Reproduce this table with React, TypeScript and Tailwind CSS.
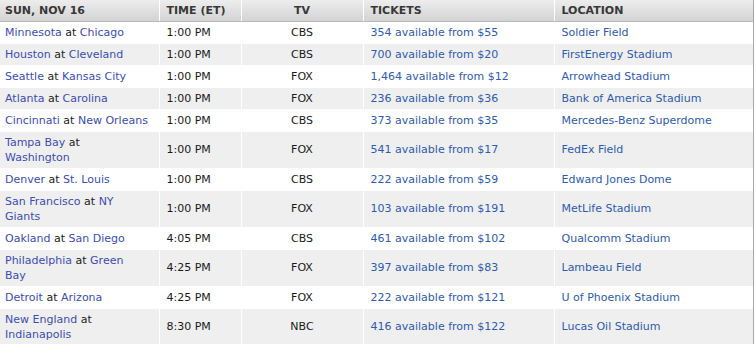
import React from "react";

type Row = {
  away: string;
  home: string;
  twoLine?: boolean;
  time: string;
  tv: string;
  tickets: string;
  location: string;
};

const rows: Row[] = [
  { away: "Minnesota", home: "Chicago", time: "1:00 PM", tv: "CBS", tickets: "354 available from $55", location: "Soldier Field" },
  { away: "Houston", home: "Cleveland", time: "1:00 PM", tv: "CBS", tickets: "700 available from $20", location: "FirstEnergy Stadium" },
  { away: "Seattle", home: "Kansas City", time: "1:00 PM", tv: "FOX", tickets: "1,464 available from $12", location: "Arrowhead Stadium" },
  { away: "Atlanta", home: "Carolina", time: "1:00 PM", tv: "FOX", tickets: "236 available from $36", location: "Bank of America Stadium" },
  { away: "Cincinnati", home: "New Orleans", time: "1:00 PM", tv: "CBS", tickets: "373 available from $35", location: "Mercedes-Benz Superdome" },
  { away: "Tampa Bay", home: "Washington", twoLine: true, time: "1:00 PM", tv: "FOX", tickets: "541 available from $17", location: "FedEx Field" },
  { away: "Denver", home: "St. Louis", time: "1:00 PM", tv: "CBS", tickets: "222 available from $59", location: "Edward Jones Dome" },
  { away: "San Francisco", home: "NY Giants", twoLine: true, time: "1:00 PM", tv: "FOX", tickets: "103 available from $191", location: "MetLife Stadium" },
  { away: "Oakland", home: "San Diego", time: "4:05 PM", tv: "CBS", tickets: "461 available from $102", location: "Qualcomm Stadium" },
  { away: "Philadelphia", home: "Green Bay", twoLine: true, time: "4:25 PM", tv: "FOX", tickets: "397 available from $83", location: "Lambeau Field" },
  { away: "Detroit", home: "Arizona", time: "4:25 PM", tv: "FOX", tickets: "222 available from $121", location: "U of Phoenix Stadium" },
  { away: "New England", home: "Indianapolis", twoLine: true, time: "8:30 PM", tv: "NBC", tickets: "416 available from $122", location: "Lucas Oil Stadium" },
];

function Home({ name, twoLine }: { name: string; twoLine?: boolean }) {
  if (!twoLine) return <span className="text-[#3b4db4]">{name}</span>;
  const parts = name.split(" ");
  // "Washington" / "Indianapolis" go entirely to line 2; "NY Giants" and "Green Bay" split
  if (parts.length === 1) {
    return (
      <>
        <br />
        <span className="text-[#3b4db4]">{name}</span>
      </>
    );
  }
  return (
    <span className="text-[#3b4db4]">
      {parts[0]}
      <br />
      {parts.slice(1).join(" ")}
    </span>
  );
}

const td = "border-r border-b border-white py-[3px] align-middle";
const thBase =
  "border-r border-white border-b border-b-[#b8b8b8] h-[21px] py-0 font-bold uppercase text-[#383838] align-middle";

export default function App() {
  return (
    <div
      className="w-[756px] h-[344px] overflow-hidden bg-white"
      style={{ fontFamily: '"DejaVu Sans", Verdana, sans-serif' }}
    >
      <div className="w-[754px] border-r border-[#a8a8a8]">
        <table className="w-[753px] table-fixed border-collapse text-[11px] leading-[15px]">
          <colgroup>
            <col className="w-[159px]" />
            <col className="w-[82px]" />
            <col className="w-[122px]" />
            <col className="w-[191px]" />
            <col className="w-[199px]" />
          </colgroup>
          <thead>
            <tr className="bg-[linear-gradient(#ededed,#d3d3d3)]">
              <th className={`${thBase} text-left pl-[5px]`}>Sun, Nov 16</th>
              <th className={`${thBase} text-left pl-[7px]`}>Time (ET)</th>
              <th className={`${thBase} text-center`}>TV</th>
              <th className={`${thBase} text-left pl-[7px]`}>Tickets</th>
              <th className={`${thBase} text-left pl-[7px] border-r-0`}>Location</th>
            </tr>
          </thead>
          <tbody>
            {rows.map((r, i) => (
              <tr key={i} className={i % 2 === 1 ? "bg-[#efefef]" : "bg-white"}>
                <td className={`${td} pl-[5px] pr-[4px] text-[#222] whitespace-nowrap`}>
                  <span className="text-[#3b4db4]">{r.away}</span> at{" "}
                  <Home name={r.home} twoLine={r.twoLine} />
                </td>
                <td className={`${td} pl-[7px] text-[#1a1a1a]`}>{r.time}</td>
                <td className={`${td} text-center text-[#1a1a1a]`}>{r.tv}</td>
                <td className={`${td} pl-[7px] text-[#2d5bb0]`}>{r.tickets}</td>
                <td className={`${td} pl-[7px] border-r-0 text-[#2d5bb0]`}>{r.location}</td>
              </tr>
            ))}
          </tbody>
        </table>
      </div>
    </div>
  );
}
